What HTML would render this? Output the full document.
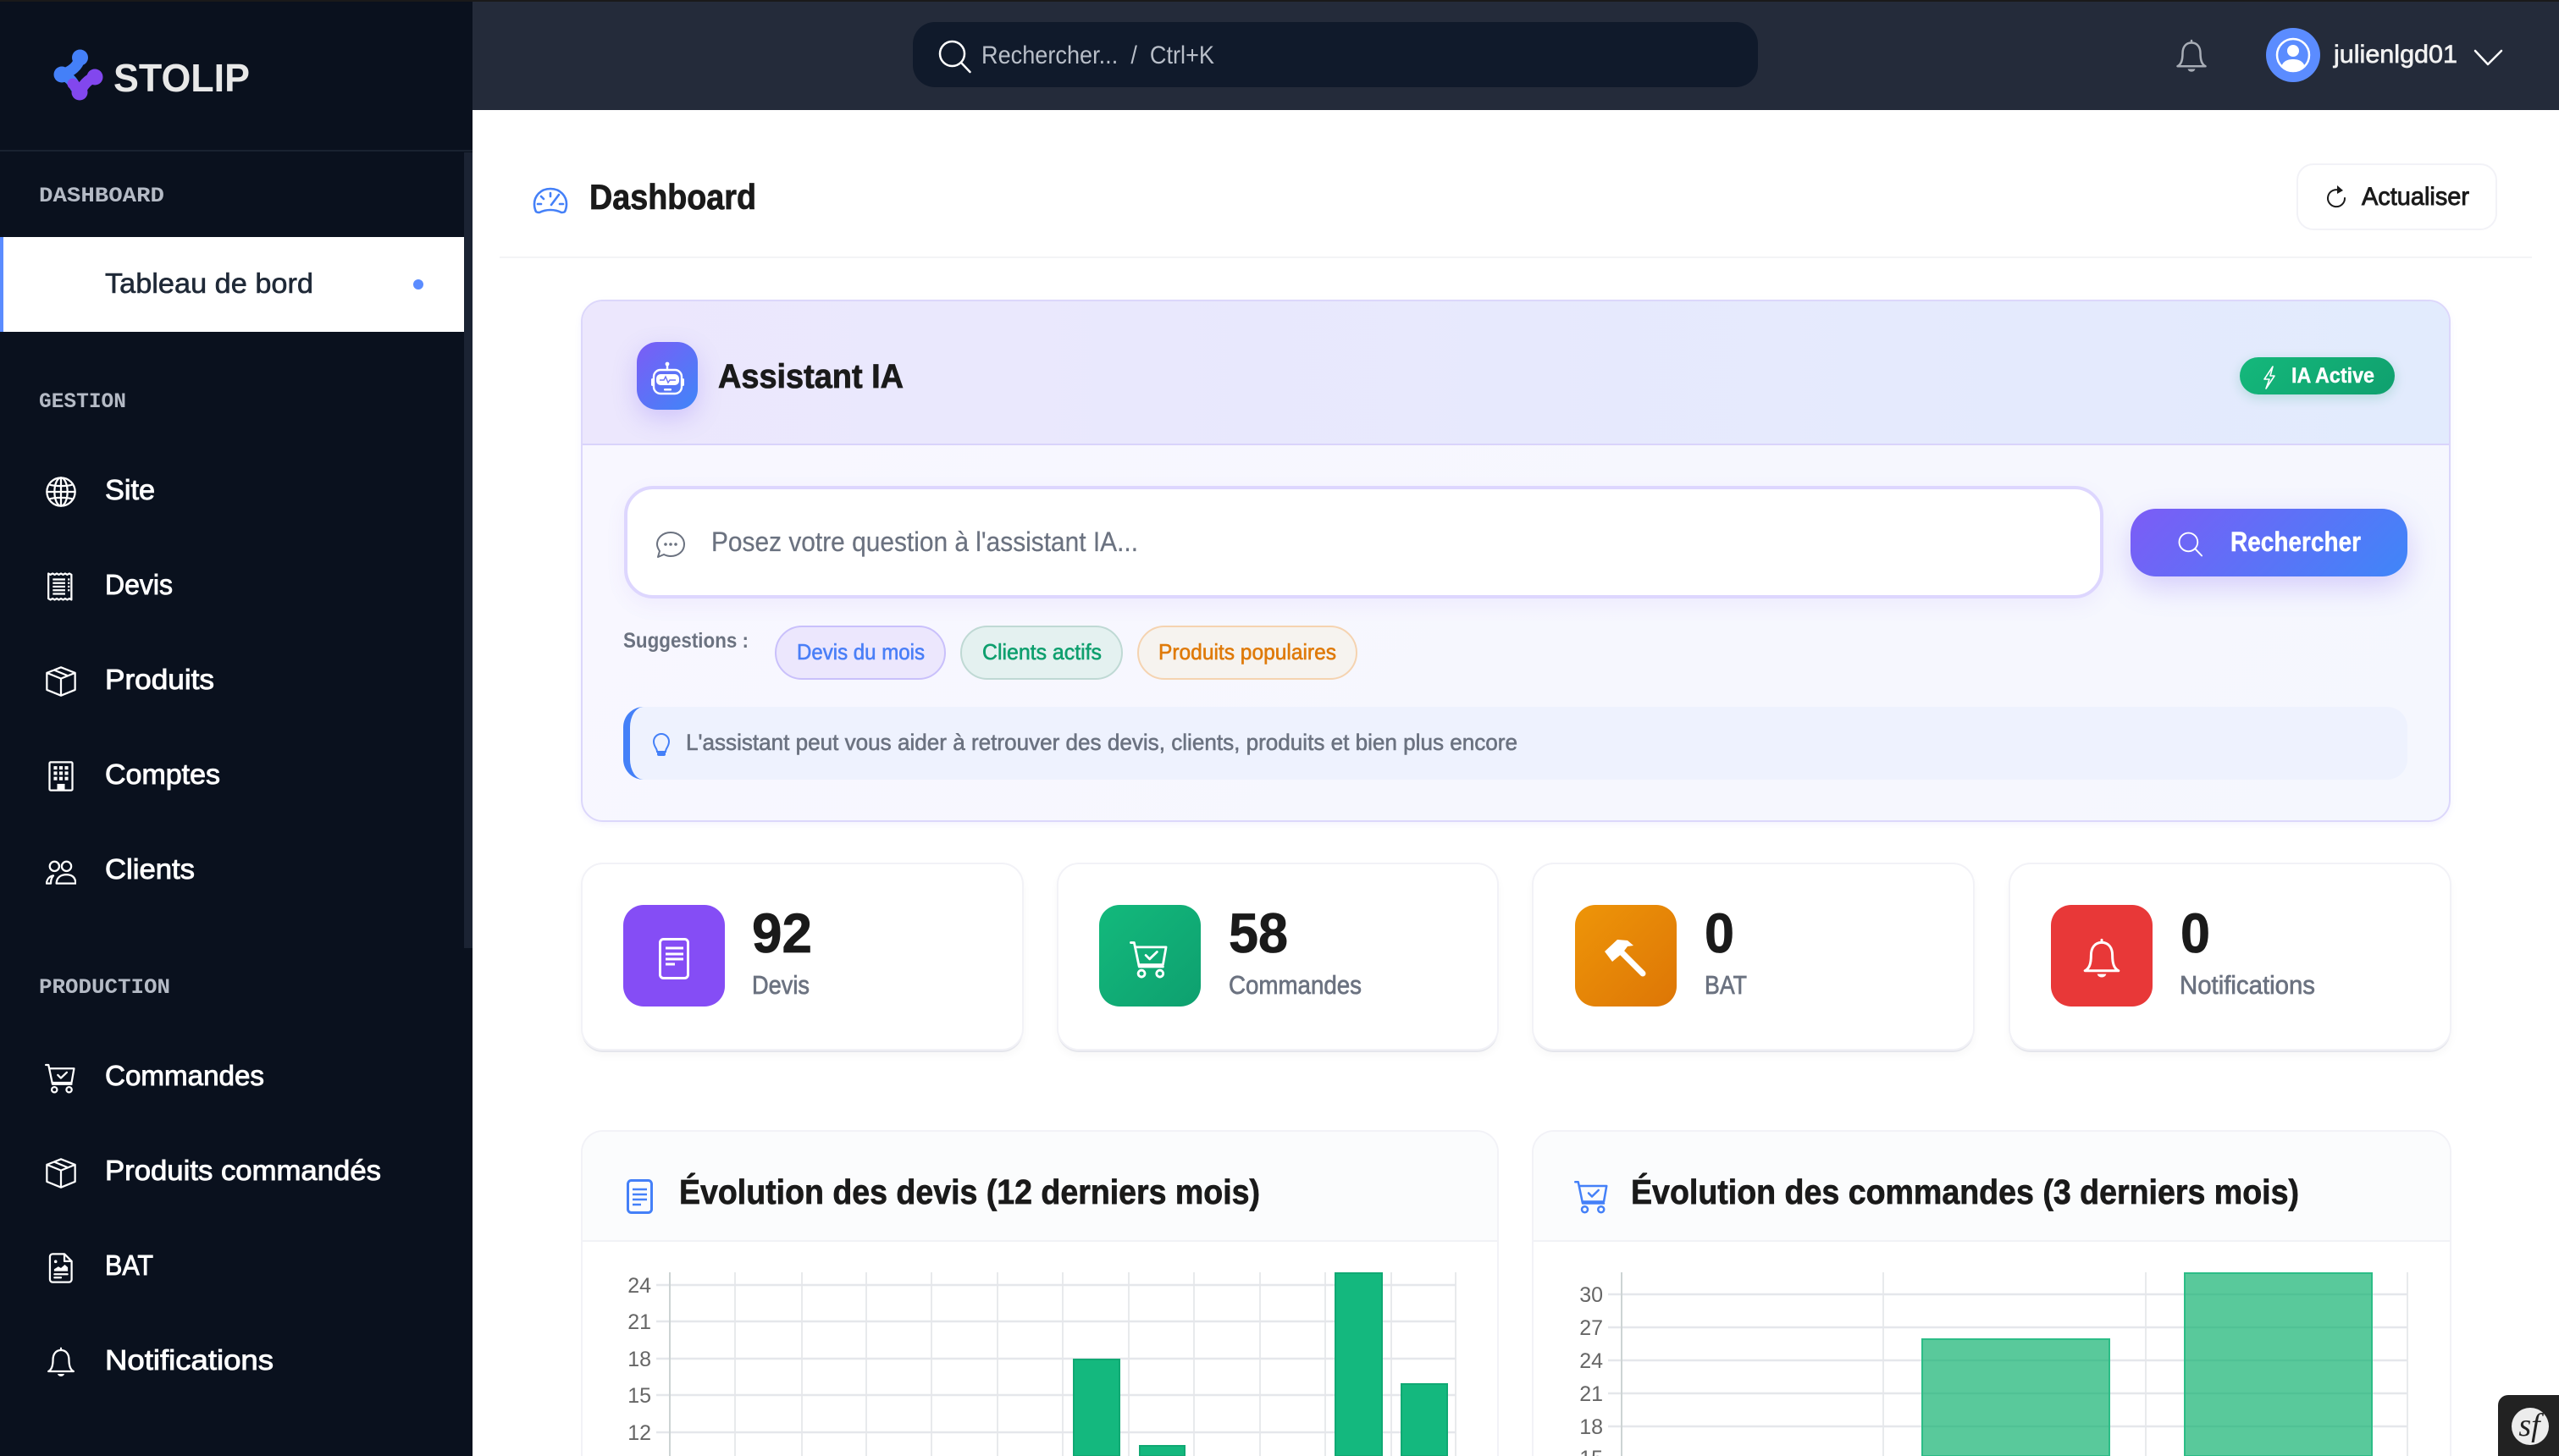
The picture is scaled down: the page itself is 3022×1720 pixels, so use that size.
<!DOCTYPE html>
<html lang="fr"><head><meta charset="utf-8"><title>Stolip Dashboard</title>
<style>
html,body{margin:0;padding:0;width:3022px;height:1720px;overflow:hidden;background:#fff;font-family:"Liberation Sans",sans-serif}
#page{position:absolute;left:0;top:0;width:3022px;height:1720px;overflow:hidden;background:#fff}
.b{position:absolute;box-sizing:border-box}
svg.o{position:absolute;left:0;top:0;overflow:hidden}
text{font-family:"Liberation Sans",sans-serif}
.nav{font-size:33px;fill:#fff;stroke:#fff;stroke-width:.9px}
.sec{font-family:"Liberation Mono",monospace;font-weight:700;font-size:25px;fill:#b4bac5}
.num{font-size:66px;font-weight:700;fill:#1a1a1a;stroke:#1a1a1a;stroke-width:.8px}
.lbl{font-size:31px;fill:#6b7280;stroke:#6b7280;stroke-width:.7px}
.h2{font-size:41px;font-weight:700;fill:#1a1a1a;stroke:#1a1a1a;stroke-width:.7px}
.tick{font-size:25px;fill:#666;text-anchor:end}
.pill{font-size:26px;stroke-width:.6px}
.i{fill:none;stroke:currentColor;stroke-width:1;stroke-linecap:round;stroke-linejoin:round}
.stat{background:#fff;border:2px solid #f2f2f7;border-radius:26px;top:1019px;height:222px;box-shadow:0 3px 0 -1px #e5e6ec,0 6px 10px rgba(0,0,0,.03)}
.sico{top:1069px;height:120px;border-radius:24px}
.chart{background:#fff;border:2px solid #f2f2f7;border-bottom:0;border-radius:26px 26px 0 0;top:1335px;height:385px;overflow:hidden}
.chart div{height:128px;background:#fbfcfd;border-bottom:2px solid #f1f2f6}
.pl{top:739px;height:64px;border-radius:32px;border:2px solid}
</style></head><body>
<div id="page">

<!-- sidebar -->
<div class="b" style="left:0;top:0;width:558px;height:1720px;background:#0a111e"></div>
<div class="b" style="left:0;top:177px;width:558px;height:2px;background:#1a2230"></div>
<div class="b" style="left:548px;top:180px;width:10px;height:940px;background:#1b2333"></div>
<div class="b" style="left:0;top:280px;width:548px;height:112px;background:#fff;border-left:4px solid #5b8cff"></div>

<!-- header -->
<div class="b" style="left:558px;top:0;width:2464px;height:130px;background:#242b3a"></div>
<div class="b" style="left:0;top:0;width:3022px;height:2px;background:#1a1a1a"></div>
<div class="b" style="left:1078px;top:26px;width:998px;height:77px;border-radius:26px;background:#101a2b"></div>
<div class="b" style="left:2676px;top:33px;width:64px;height:64px;border-radius:50%;background:#5b8cff"></div>

<!-- page head -->
<div class="b" style="left:590px;top:303px;width:2400px;height:2px;background:#f3f4f6"></div>
<div class="b" style="left:2712px;top:193px;width:237px;height:79px;border:2px solid #f2f2f7;border-radius:20px;background:#fff"></div>

<!-- AI card -->
<div class="b" style="left:686px;top:354px;width:2208px;height:617px;border:2px solid #dcd7fb;border-radius:26px;background:linear-gradient(135deg,#f8f7ff,#f5f7fe);box-shadow:0 3px 8px rgba(120,100,240,.08);overflow:hidden">
  <div style="height:168px;background:linear-gradient(90deg,#ece7fd,#e2ebfd);border-bottom:2px solid #d9d3fb"></div>
</div>
<div class="b" style="left:752px;top:404px;width:72px;height:80px;border-radius:24px;background:linear-gradient(135deg,#7c5cf6,#3f86f8);box-shadow:0 10px 28px rgba(124,92,246,.25)"></div>
<div class="b" style="left:2645px;top:422px;width:183px;height:44px;border-radius:22px;background:linear-gradient(135deg,#14b87b,#10a06e);box-shadow:0 4px 14px rgba(16,160,110,.22)"></div>
<div class="b" style="left:737px;top:574px;width:1747px;height:133px;border:4px solid #ddd6fe;border-radius:34px;background:#fff;box-shadow:0 8px 24px rgba(124,92,246,.07)"></div>
<div class="b" style="left:2516px;top:601px;width:327px;height:80px;border-radius:30px;background:linear-gradient(135deg,#7c5cf6,#3f86f8);box-shadow:0 12px 34px rgba(124,92,246,.28)"></div>
<div class="b pl" style="left:915px;width:202px;background:#ece7fd;border-color:#c9c0fb"></div>
<div class="b pl" style="left:1134px;width:192px;background:#e4f1f0;border-color:#bfd9d4"></div>
<div class="b pl" style="left:1343px;width:260px;background:#f6f3ef;border-color:#f5d3b0"></div>
<div class="b" style="left:736px;top:835px;width:2107px;height:86px;background:#eef2fe;border-left:8px solid #4480f8;border-radius:24px"></div>

<!-- stats -->
<div class="b stat" style="left:686px;width:523px"></div>
<div class="b stat" style="left:1248px;width:522px"></div>
<div class="b stat" style="left:1809px;width:523px"></div>
<div class="b stat" style="left:2372px;width:523px"></div>
<div class="b sico" style="left:736px;width:120px;background:#854df5"></div>
<div class="b sico" style="left:1298px;width:120px;background:linear-gradient(135deg,#13b97c,#0ea06f)"></div>
<div class="b sico" style="left:1860px;width:120px;background:linear-gradient(135deg,#ee9508,#dd7606)"></div>
<div class="b sico" style="left:2422px;width:120px;background:#e83838"></div>

<!-- charts -->
<div class="b chart" style="left:686px;width:1084px"><div></div></div>
<div class="b chart" style="left:1809px;width:1086px"><div></div></div>

<svg class="o" width="3022" height="1720" viewBox="0 0 3022 1720" xmlns="http://www.w3.org/2000/svg">
<defs>
<symbol id="globe" viewBox="0 0 16 16"><g class="i"><circle cx="8" cy="8" r="7.4"/><ellipse cx="8" cy="8" rx="3.4" ry="7.4"/><path d="M8 .6V15.4M.6 8H15.4M1.8 4.2C5 5.2 11 5.2 14.2 4.2M1.8 11.8C5 10.8 11 10.8 14.2 11.8"/></g></symbol>
<symbol id="receipt" viewBox="0 0 16 16"><g class="i" stroke-width=".9"><path d="M1.4 1.1l1.1.6 1.1-.6 1.1.6 1.1-.6 1.1.6 1.1-.6 1.1.6 1.1-.6 1.1.6 1.1-.6 1.1.6V14.9l-1.1-.6-1.1.6-1.1-.6-1.1.6-1.1-.6-1.1.6-1.1-.6-1.1.6-1.1-.6-1.1.6-1.1-.6Z"/><path d="M3.7 4.2H10.2M3.7 6.1H10.2M3.7 8H10.2M3.7 9.9H10.2M3.7 11.8H10.2M11.6 4.2H12.6M11.6 6.1H12.6M11.6 8H12.6M11.6 9.9H12.6" stroke-linecap="butt"/></g></symbol>
<symbol id="box" viewBox="0 0 16 16"><g class="i" stroke-width=".9"><path d="M8 .6L15.4 3.5V12.4L8 15.4.6 12.4V3.5ZM.6 3.5L8 6.5 15.4 3.5M8 6.5V15.4M4.4 2L11.6 5"/></g></symbol>
<symbol id="building" viewBox="0 0 16 16"><g class="i"><rect x="2" y=".6" width="12" height="14.8" rx=".6"/></g><g fill="currentColor"><rect x="4.2" y="2.7" width="1.8" height="1.8"/><rect x="7.1" y="2.7" width="1.8" height="1.8"/><rect x="10" y="2.7" width="1.8" height="1.8"/><rect x="4.2" y="5.5" width="1.8" height="1.8"/><rect x="7.1" y="5.5" width="1.8" height="1.8"/><rect x="10" y="5.5" width="1.8" height="1.8"/><rect x="4.2" y="8.3" width="1.8" height="1.8"/><rect x="7.1" y="8.3" width="1.8" height="1.8"/><rect x="10" y="8.3" width="1.8" height="1.8"/><rect x="6" y="12" width="4" height="3.4"/></g></symbol>
<symbol id="people" viewBox="0 0 16 16"><g class="i" stroke-width=".9"><circle cx="4.6" cy="5.5" r="2.5"/><circle cx="10.9" cy="5.5" r="2.5"/><path d="M5.6 14.5C5.8 11.2 8 9.9 10.9 9.9S15.6 11.2 15.7 14.5ZM.4 14.5C.6 12.4 1.8 10.8 4 10.4 3 11.6 2.6 13 2.7 14.5Z"/></g></symbol>
<symbol id="cart" viewBox="0 0 16 16"><g class="i" stroke-width=".85"><path d="M.5 .9H1.9L4 11H14M2.4 2.8H15.3L14 10.2H3.8"/><circle cx="5" cy="13.9" r="1.4"/><circle cx="12.7" cy="13.9" r="1.4"/><path d="M6.8 6.2L8.4 7.8 11.5 4.8"/></g></symbol>
<symbol id="fileimg" viewBox="0 0 16 16"><g class="i"><path d="M3.6.6H9.8L13.6 4.4V14a1.4 1.4 0 0 1-1.4 1.4H3.6A1.4 1.4 0 0 1 2.2 14V2A1.4 1.4 0 0 1 3.6.6ZM9.8.6V4.4H13.6"/><path d="M4.6 11.2H11.4M4.6 13H8"/></g><path d="M4.4 9.6V8.6L6.6 7.2 8 8 10 6.2 11.6 7.6V9.6Z" fill="currentColor"/><circle cx="5.2" cy="4.6" r=".8" fill="currentColor"/></symbol>
<symbol id="bell" viewBox="0 0 16 16"><g class="i"><path d="M8 1.8C5.2 1.8 3.8 4 3.8 6.8 3.8 10 3.2 12 1.4 12.9H14.6C12.8 12 12.2 10 12.2 6.8 12.2 4 10.8 1.8 8 1.8ZM8 1.8V.8"/></g><path d="M6.2 14.2H9.8A1.9 1.9 0 0 1 6.2 14.2Z" fill="currentColor"/></symbol>
<symbol id="search" viewBox="0 0 16 16"><g class="i"><circle cx="6.6" cy="6.6" r="5.8"/><path d="M10.9 10.9L15 15.2"/></g></symbol>
</defs>

<!-- logo -->
<g fill="none" stroke-linecap="round" stroke-linejoin="round" stroke-width="13">
<path d="M94.5 68C92 79 84 84 74 88C81 91 86 96 89 103" stroke="#4480f8"/>
<path d="M112 91C104 94 98 100 94 110" stroke="#8247ee"/>
<path d="M94 110C92 105 90 102 86 99" stroke="#8247ee"/>
</g>
<circle cx="94.5" cy="68" r="9.5" fill="#4480f8"/><circle cx="73" cy="88" r="9.5" fill="#4480f8"/>
<circle cx="112" cy="91" r="9.5" fill="#8247ee"/><circle cx="94" cy="109" r="9.5" fill="#8247ee"/>
<text x="134" y="108" font-size="46" font-weight="700" fill="#e8e8e8" textLength="161" lengthAdjust="spacingAndGlyphs">STOLIP</text>

<!-- sidebar text -->
<text class="sec" x="46" y="238" textLength="148" lengthAdjust="spacingAndGlyphs">DASHBOARD</text>
<text x="124" y="346" font-size="33" fill="#1f2937" stroke="#1f2937" stroke-width=".6" textLength="246" lengthAdjust="spacingAndGlyphs">Tableau de bord</text>
<circle cx="494" cy="336" r="6" fill="#5b8cff"/>
<text class="sec" x="46" y="481" textLength="103" lengthAdjust="spacingAndGlyphs">GESTION</text>
<text class="nav" x="124" y="590" textLength="59" lengthAdjust="spacingAndGlyphs">Site</text>
<text class="nav" x="124" y="702" textLength="80" lengthAdjust="spacingAndGlyphs">Devis</text>
<text class="nav" x="124" y="814" textLength="129" lengthAdjust="spacingAndGlyphs">Produits</text>
<text class="nav" x="124" y="926" textLength="136" lengthAdjust="spacingAndGlyphs">Comptes</text>
<text class="nav" x="124" y="1038" textLength="106" lengthAdjust="spacingAndGlyphs">Clients</text>
<text class="sec" x="46" y="1173" textLength="155" lengthAdjust="spacingAndGlyphs">PRODUCTION</text>
<text class="nav" x="124" y="1282" textLength="188" lengthAdjust="spacingAndGlyphs">Commandes</text>
<text class="nav" x="124" y="1394" textLength="326" lengthAdjust="spacingAndGlyphs">Produits commandés</text>
<text class="nav" x="124" y="1506" textLength="57" lengthAdjust="spacingAndGlyphs">BAT</text>
<text class="nav" x="124" y="1618" textLength="199" lengthAdjust="spacingAndGlyphs">Notifications</text>

<g color="#fff">
<use href="#globe" x="54" y="563" width="36" height="36"/>
<use href="#receipt" x="54" y="675" width="36" height="36"/>
<use href="#box" x="54" y="787" width="36" height="36"/>
<use href="#building" x="54" y="899" width="36" height="36"/>
<use href="#people" x="54" y="1011" width="36" height="36"/>
<use href="#cart" x="53" y="1256" width="36" height="36"/>
<use href="#box" x="54" y="1368" width="36" height="36"/>
<use href="#fileimg" x="54" y="1480" width="36" height="36"/>
<use href="#bell" x="54" y="1591" width="36" height="36"/>
</g>

<!-- header content -->
<use href="#search" x="1108" y="47" width="40" height="40" color="#fff"/>
<text x="1159" y="75" font-size="30" fill="#b8bec8" textLength="275" lengthAdjust="spacingAndGlyphs" xml:space="preserve">Rechercher...  /  Ctrl+K</text>
<use href="#bell" x="2568" y="46" width="40" height="40" color="#a8adb6"/>
<circle cx="2708" cy="65" r="19" fill="none" stroke="#fff" stroke-width="2.5"/>
<circle cx="2708" cy="60" r="7" fill="#fff"/>
<path d="M2694 79C2696 72 2702 70 2708 70S2720 72 2722 79A19 19 0 0 1 2694 79Z" fill="#fff"/>
<text x="2756" y="74" font-size="30" fill="#f1f1f1" stroke="#f1f1f1" stroke-width=".7" textLength="146" lengthAdjust="spacingAndGlyphs">julienlgd01</text>
<path d="M2923 60L2938 76 2954 60" fill="none" stroke="#fff" stroke-width="2.5" stroke-linecap="round" stroke-linejoin="round"/>

<!-- page head content -->
<g fill="none" stroke="#4480f8" stroke-width="2.6" stroke-linecap="round" stroke-linejoin="round">
<path d="M650 223C638 223 631 232 631 241 631 245 632 248 633 250 634 251 636 251 637 251 641 249 645 248 650 248S659 249 663 251C664 251 666 251 667 250 668 248 669 245 669 241 669 232 662 223 650 223Z"/>
<path d="M650 228V232M639 232L642 235M635 241H639M661 241H665M660 230L651 242"/>
</g>
<text x="696" y="247" font-size="42" font-weight="700" fill="#1a1a1a" stroke="#1a1a1a" stroke-width=".8" textLength="197" lengthAdjust="spacingAndGlyphs">Dashboard</text>
<g fill="none" stroke="#1a1a1a" stroke-width="2" stroke-linecap="round"><path d="M2763 225A10 10 0 1 0 2769 234"/></g>
<path d="M2760 219L2767 225 2760 229Z" fill="#1a1a1a"/>
<text x="2789" y="242" font-size="30" fill="#1a1a1a" stroke="#1a1a1a" stroke-width=".9" textLength="127" lengthAdjust="spacingAndGlyphs">Actualiser</text>

<!-- AI header -->
<g fill="none" stroke="#fff" stroke-width="2.4" stroke-linecap="round" stroke-linejoin="round">
<path d="M788 430V437"/>
<rect x="772" y="437" width="33" height="28" rx="8"/>
</g>
<circle cx="788" cy="430" r="2.4" fill="#fff"/>
<rect x="769" y="447" width="3" height="9" rx="1.5" fill="#fff"/><rect x="805" y="447" width="3" height="9" rx="1.5" fill="#fff"/>
<rect x="775" y="442" width="27" height="13" rx="5" fill="#fff"/>
<path d="M779 449H784L786 445 789 452 791 449H798" fill="none" stroke="#6a70f6" stroke-width="1.4"/>
<rect x="784" y="459" width="9" height="2.5" rx="1" fill="#fff"/>
<text x="848" y="458" font-size="40" font-weight="700" fill="#1a1a1a" stroke="#1a1a1a" stroke-width=".8" textLength="219" lengthAdjust="spacingAndGlyphs">Assistant IA</text>
<path d="M2684 433L2674 448H2680L2676 459 2686 444H2681Z" fill="none" stroke="#fff" stroke-width="1.6" stroke-linejoin="round"/>
<text x="2706" y="452" font-size="25" font-weight="700" fill="#fff" stroke="#fff" stroke-width=".4" textLength="98" lengthAdjust="spacingAndGlyphs">IA Active</text>

<!-- AI input -->
<g fill="none" stroke="#6b7280" stroke-width="2" stroke-linejoin="round"><path d="M777 658L779 651C777 648 776 645 776 643 776 635 783 629 792 629S808 635 808 643 801 657 792 657C789 657 786 656 784 655Z"/></g>
<g fill="#6b7280"><circle cx="786" cy="643" r="1.8"/><circle cx="792" cy="643" r="1.8"/><circle cx="798" cy="643" r="1.8"/></g>
<text x="840" y="651" font-size="32" fill="#6b7280" stroke="#6b7280" stroke-width=".25" textLength="504" lengthAdjust="spacingAndGlyphs">Posez votre question à l'assistant IA...</text>
<use href="#search" x="2572" y="628" width="30" height="30" color="#fff"/>
<text x="2634" y="651" font-size="32" font-weight="700" fill="#fff" stroke="#fff" stroke-width=".4" textLength="154" lengthAdjust="spacingAndGlyphs">Rechercher</text>

<text x="736" y="765" font-size="25" font-weight="700" fill="#6b7280" textLength="148" lengthAdjust="spacingAndGlyphs">Suggestions :</text>
<text class="pill" x="941" y="779" fill="#4a7ff7" stroke="#4a7ff7" textLength="151" lengthAdjust="spacingAndGlyphs">Devis du mois</text>
<text class="pill" x="1160" y="779" fill="#0e9f6e" stroke="#0e9f6e" textLength="141" lengthAdjust="spacingAndGlyphs">Clients actifs</text>
<text class="pill" x="1368" y="779" fill="#df7a09" stroke="#df7a09" textLength="210" lengthAdjust="spacingAndGlyphs">Produits populaires</text>

<path d="M776 888C776 884 772 882 772 876A9 9 0 0 1 790 876C790 882 786 884 786 888Z" fill="none" stroke="#4480f8" stroke-width="2"/>
<path d="M776 888H786V891A2 2 0 0 1 784 893H778A2 2 0 0 1 776 891Z" fill="#4480f8"/>
<text x="810" y="886" font-size="27" fill="#6b7280" stroke="#6b7280" stroke-width=".6" textLength="982" lengthAdjust="spacingAndGlyphs">L'assistant peut vous aider à retrouver des devis, clients, produits et bien plus encore</text>

<!-- stats content -->
<g fill="none" stroke="#fff" stroke-width="3" stroke-linejoin="round"><rect x="779.5" y="1109.5" width="33" height="46" rx="4"/></g>
<path d="M786 1120H807M786 1127H807M786 1133H807M786 1139H797" stroke="#fff" stroke-width="3"/>
<use href="#cart" x="1334" y="1111" width="45" height="45" color="#fff"/>
<path d="M1914 1124L1940 1150" stroke="#fff" stroke-width="7" stroke-linecap="round"/>
<path d="M1895 1124L1910 1110 1922 1111 1929 1117 1922 1118 1916 1126 1904 1136Z" fill="#fff"/>
<use href="#bell" x="2458" y="1108" width="48" height="48" color="#fff"/>

<text class="num" x="888" y="1125" textLength="71" lengthAdjust="spacingAndGlyphs">92</text>
<text class="num" x="1451" y="1125" textLength="70" lengthAdjust="spacingAndGlyphs">58</text>
<text class="num" x="2013" y="1125" textLength="35" lengthAdjust="spacingAndGlyphs">0</text>
<text class="num" x="2575" y="1125" textLength="35" lengthAdjust="spacingAndGlyphs">0</text>
<text class="lbl" x="888" y="1174" textLength="68" lengthAdjust="spacingAndGlyphs">Devis</text>
<text class="lbl" x="1451" y="1174" textLength="157" lengthAdjust="spacingAndGlyphs">Commandes</text>
<text class="lbl" x="2013" y="1174" textLength="50" lengthAdjust="spacingAndGlyphs">BAT</text>
<text class="lbl" x="2574" y="1174" textLength="160" lengthAdjust="spacingAndGlyphs">Notifications</text>

<!-- chart headers -->
<rect x="741.5" y="1394.5" width="28" height="38" rx="4" fill="none" stroke="#4480f8" stroke-width="3"/>
<path d="M747 1405H764M747 1411H764M747 1417H764M747 1423H757" stroke="#4480f8" stroke-width="2.6"/>
<text class="h2" x="802" y="1422" textLength="686" lengthAdjust="spacingAndGlyphs">Évolution des devis (12 derniers mois)</text>
<use href="#cart" x="1859" y="1394" width="40" height="40" color="#4480f8"/>
<text class="h2" x="1926" y="1422" textLength="789" lengthAdjust="spacingAndGlyphs">Évolution des commandes (3 derniers mois)</text>

<!-- chart 1 -->
<g stroke="#e3e5e8" stroke-width="1.6">
<path d="M868 1503V1720M947 1503V1720M1023 1503V1720M1100 1503V1720M1178 1503V1720M1255 1503V1720M1333 1503V1720M1410 1503V1720M1488 1503V1720M1565 1503V1720M1643 1503V1720M1719 1503V1720"/>
</g>
<path d="M775 1518H1719M775 1561H1719M775 1605H1719M775 1648H1719M775 1692H1719" stroke="#e5e7eb" stroke-width="2.5"/>
<path d="M791 1503V1720" stroke="#cdd4d4" stroke-width="2"/>
<text class="tick" x="769" y="1527">24</text>
<text class="tick" x="769" y="1570">21</text>
<text class="tick" x="769" y="1614">18</text>
<text class="tick" x="769" y="1657">15</text>
<text class="tick" x="769" y="1701">12</text>
<path d="M1268 1606H1322V1720H1268ZM1346 1708H1399V1720H1346ZM1577 1504H1632V1720H1577ZM1655 1635H1709V1720H1655Z" fill="#14b87e" stroke="#10a973" stroke-width="2"/>

<!-- chart 2 -->
<path d="M2224 1503V1720M2534 1503V1720M2843 1503V1720" stroke="#e3e5e8" stroke-width="1.6"/>
<path d="M1899 1529H2843M1899 1568H2843M1899 1607H2843M1899 1646H2843M1899 1685H2843" stroke="#e5e7eb" stroke-width="2.5"/>
<path d="M1915 1503V1720" stroke="#cdd4d4" stroke-width="2"/>
<text class="tick" x="1893" y="1538">30</text>
<text class="tick" x="1893" y="1577">27</text>
<text class="tick" x="1893" y="1616">24</text>
<text class="tick" x="1893" y="1655">21</text>
<text class="tick" x="1893" y="1694">18</text>
<text class="tick" x="1893" y="1731">15</text>
<path d="M2270 1582H2491V1720H2270ZM2580 1504H2801V1720H2580Z" fill="rgb(19,178,112)" fill-opacity=".7" stroke="#2cbd87" stroke-width="2"/>

<!-- symfony toolbar -->
<path d="M2962 1648H3022V1720H2950V1660A12 12 0 0 1 2962 1648Z" fill="#222"/>
<circle cx="2988" cy="1685" r="22" fill="#ececec"/>
<text x="2987" y="1696" font-size="38" text-anchor="middle" fill="#222" font-style="italic" style="font-family:'Liberation Serif',serif">sf</text>
</svg>
</div>
</body></html>
